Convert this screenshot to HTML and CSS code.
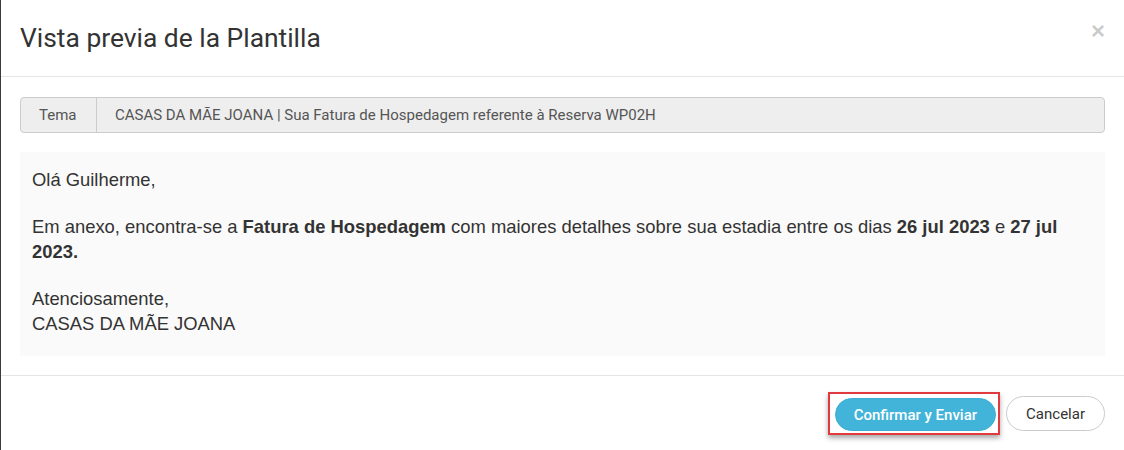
FILE: index.html
```html
<!DOCTYPE html>
<html lang="es">
<head>
    <meta charset="UTF-8">
    <title>Vista previa de la Plantilla</title>
    <link rel="stylesheet" href="styles.css">
</head>
<body>
    <div class="modal">
        <!-- HEADER -->
        <div class="modal-header">
            <h4 class="modal-title">Vista previa de la Plantilla</h4>
            <button class="close-btn" type="button">&times;</button>
        </div>

        <!-- BODY -->
        <div class="modal-body">
            <div class="subject-group">
                <span class="subject-label">Tema</span>
                <span class="subject-value">CASAS DA MÃE JOANA | Sua Fatura de Hospedagem referente à Reserva WP02H</span>
            </div>

            <div class="mail-preview">
                <p>Olá Guilherme,</p>
                <p>Em anexo, encontra-se a <b>Fatura de Hospedagem</b> com maiores detalhes sobre sua estadia entre os dias <b>26 jul 2023</b> e <b>27 jul 2023.</b></p>
                <p>Atenciosamente,<br>CASAS DA MÃE JOANA</p>
            </div>
        </div>

        <!-- FOOTER -->
        <div class="modal-footer">
            <span class="highlight">
                <button class="btn btn-primary" type="button">Confirmar y Enviar</button>
            </span>
            <button class="btn btn-default" type="button">Cancelar</button>
        </div>
    </div>
</body>
</html>
```

FILE: styles.css
```css
html, body {
    margin: 0;
    background: white;
}

.modal {
    height: 450px;
    border-left: 1px solid #3a3a3a;
    font-family: Roboto, "Liberation Sans", sans-serif;
    color: #333;
    box-sizing: border-box;
}

.modal-header {
    display: flex;
    align-items: flex-start;
    justify-content: space-between;
    padding: 20px 19px 20px 19px;
    border-bottom: 1px solid #e5e5e5;
}

.modal-title {
    margin: 0;
    font-size: 26.4px;
    font-weight: 400;
    line-height: 36px;
    color: #333;
}

.close-btn {
    background: none;
    border: none;
    padding: 0;
    margin-top: -1px;
    font-family: "Liberation Sans", sans-serif;
    font-size: 24px;
    font-weight: bold;
    line-height: 1;
    color: #000;
    opacity: 0.2;
    cursor: pointer;
}

.modal-body {
    padding: 20px 19px 19px 19px;
}

.subject-group {
    display: flex;
    height: 36px;
    box-sizing: border-box;
    border: 1px solid #ccc;
    border-radius: 4px;
    background: #eee;
    font-size: 15px;
    color: #555;
    margin-bottom: 19px;
}

.subject-label {
    display: flex;
    align-items: center;
    width: 76px;
    box-sizing: border-box;
    padding-left: 18px;
    border-right: 1px solid #ccc;
}

.subject-value {
    display: flex;
    align-items: center;
    padding-left: 18px;
}

.mail-preview {
    background: #fafafa;
    padding: 15px 12px 20px 12px;
    font-family: "Liberation Sans", Arial, sans-serif;
    font-size: 18.4px;
    line-height: 25px;
    color: #333;
}

.mail-preview p {
    margin: 0 0 22px 0;
}

.mail-preview p:last-child {
    margin-bottom: 0;
}

.modal-footer {
    display: flex;
    justify-content: flex-end;
    align-items: center;
    gap: 6px;
    padding: 16px 19px 15px 19px;
    border-top: 1px solid #e5e5e5;
}

/* Red annotation frame around the main action */
.highlight {
    display: inline-flex;
    padding: 4px 2px 2px 5px;
    border: 2px solid #e0393e;
    box-shadow: 0 3px 5px rgba(0,0,0,0.35);
}

.btn {
    font-family: Roboto, "Liberation Sans", sans-serif;
    font-size: 15px;
    border-radius: 18px;
    cursor: pointer;
}

.btn-primary {
    height: 33px;
    padding: 0 18px;
    background: #42b4d9;
    border: 1px solid #3aaed3;
    color: white;
    font-weight: 500;
}

.btn-default {
    height: 35px;
    padding: 0 19px;
    background: white;
    border: 1px solid #ccc;
    color: #333;
}
```
